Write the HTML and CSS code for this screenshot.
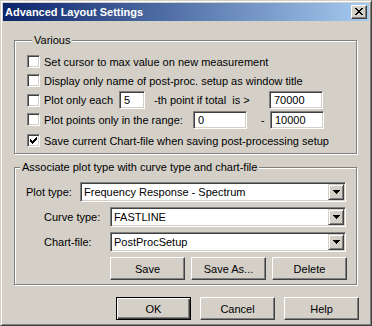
FILE: index.html
```html
<!DOCTYPE html>
<html>
<head>
<meta charset="utf-8">
<link rel="stylesheet" href="styles.css">
</head>
<body>
<div class="window">
  <div class="titlebar">
    <span class="title">Advanced Layout Settings</span>
    <div class="close">
      <svg width="8" height="7" viewBox="0 0 8 7" shape-rendering="crispEdges"><path fill="#000" d="M0 0h2v1H0z M6 0h2v1H6z M1 1h2v1H1z M5 1h2v1H5z M2 2h4v1H2z M3 3h2v1H3z M2 4h4v1H2z M1 5h2v1H1z M5 5h2v1H5z M0 6h2v1H0z M6 6h2v1H6z"/></svg>
    </div>
  </div>
  <div class="content">
    <fieldset class="group various">
      <legend>Various</legend>
      <div class="row r1"><span class="cb"></span><span class="lbl">Set cursor to max value on new measurement</span></div>
      <div class="row r2"><span class="cb"></span><span class="lbl">Display only name of post-proc. setup as window title</span></div>
      <div class="row r3">
        <span class="cb"></span><span class="lbl w-each">Plot only each</span>
        <span class="edit w-5">5</span>
        <span class="lbl w-th">-th point if total&nbsp; is &gt;</span>
        <span class="edit w-num">70000</span>
      </div>
      <div class="row r4">
        <span class="cb"></span><span class="lbl w-range">Plot points only in the range:</span>
        <span class="edit w-num">0</span>
        <span class="lbl w-dash">-</span>
        <span class="edit w-num">10000</span>
      </div>
      <div class="row r5"><span class="cb checked"><svg width="7" height="7" viewBox="0 0 7 7" shape-rendering="crispEdges"><path fill="#000" d="M6 0h1v1H6z M5 1h2v1H5z M0 2h1v1H0z M4 2h3v1H4z M0 3h2v1H0z M3 3h3v1H3z M0 4h5v1H0z M1 5h3v1H1z M2 6h1v1H2z"/></svg></span><span class="lbl">Save current Chart-file when saving post-processing setup</span></div>
    </fieldset>

    <fieldset class="group assoc">
      <legend>Associate plot type with curve type and chart-file</legend>
      <div class="crow plot">
        <span class="clabel">Plot type:</span>
        <div class="combo"><span class="ctext">Frequency Response - Spectrum</span><span class="arrow"><svg width="7" height="4" viewBox="0 0 7 4" shape-rendering="crispEdges"><path fill="#000" d="M0 0h7v1H0z M1 1h5v1H1z M2 2h3v1H2z M3 3h1v1H3z"/></svg></span></div>
      </div>
      <div class="crow sub">
        <span class="clabel">Curve type:</span>
        <div class="combo"><span class="ctext">FASTLINE</span><span class="arrow"><svg width="7" height="4" viewBox="0 0 7 4" shape-rendering="crispEdges"><path fill="#000" d="M0 0h7v1H0z M1 1h5v1H1z M2 2h3v1H2z M3 3h1v1H3z"/></svg></span></div>
      </div>
      <div class="crow sub">
        <span class="clabel">Chart-file:</span>
        <div class="combo"><span class="ctext">PostProcSetup</span><span class="arrow"><svg width="7" height="4" viewBox="0 0 7 4" shape-rendering="crispEdges"><path fill="#000" d="M0 0h7v1H0z M1 1h5v1H1z M2 2h3v1H2z M3 3h1v1H3z"/></svg></span></div>
      </div>
      <div class="brow">
        <span class="btn">Save</span>
        <span class="btn">Save As...</span>
        <span class="btn">Delete</span>
      </div>
    </fieldset>

    <div class="footer">
      <span class="btn default">OK</span>
      <span class="btn">Cancel</span>
      <span class="btn">Help</span>
    </div>
  </div>
</div>
</body>
</html>
```

FILE: styles.css
```css
* { box-sizing: border-box; }
body {
  margin: 0;
  font-family: "Liberation Sans", Arial, sans-serif;
  font-size: 11px;
  color: #000;
  background: #d4d0c8;
}
.window {
  width: 372px;
  height: 326px;
  background: #d4d0c8;
  border: 1px solid;
  border-color: #d4d0c8 #404040 #404040 #d4d0c8;
  box-shadow: inset 1px 1px #fff, inset -1px -1px #808080;
  padding: 2px;
  display: flex;
  flex-direction: column;
}
.titlebar {
  height: 18px;
  flex: none;
  display: flex;
  align-items: center;
  justify-content: space-between;
  padding: 0 2px;
  background: linear-gradient(to right, #0a246a, #a6caf0);
}
.title {
  color: #fff;
  font-weight: bold;
  font-size: 11px;
  line-height: 18px;
}
.close {
  width: 16px;
  height: 14px;
  background: #d4d0c8;
  border: 1px solid;
  border-color: #fff #404040 #404040 #fff;
  box-shadow: inset -1px -1px #808080;
  display: flex;
  align-items: flex-start;
  justify-content: flex-start;
  padding: 2px 0 0 3px;
}
.close svg { display: block; }
.content {
  padding: 13px 12px 0 11px;
}
.group {
  margin: 0;
  padding: 0;
  border: 1px solid #808080;
  box-shadow: inset 1px 1px #fff, 1px 1px #fff;
  min-width: 0;
}
.group legend {
  margin-left: 5px;
  padding: 0 2px;
  line-height: 13px;
  height: 13px;
  background: #d4d0c8;
}
.various { padding: 5px 0 3px 12px; }
.row {
  display: flex;
  align-items: center;
  height: 19px;
}
.r3 { height: 20px; }
.r5 { margin-top: 2px; }
.cb {
  width: 13px;
  height: 13px;
  flex: none;
  background: #fff;
  border: 1px solid;
  border-color: #808080 #fff #fff #808080;
  box-shadow: inset 1px 1px #404040, inset -1px -1px #d4d0c8;
  margin-right: 4px;
  padding: 2px 0 0 2px;
}
.cb svg { display: block; }
.lbl { white-space: nowrap; flex: none; }
.edit {
  height: 18px;
  flex: none;
  background: #fff;
  border: 1px solid;
  border-color: #808080 #fff #fff #808080;
  box-shadow: inset 1px 1px #404040, inset -1px -1px #d4d0c8;
  padding-left: 4px;
  line-height: 16px;
  white-space: nowrap;
}
.w-each { width: 75px; }
.w-5 { width: 26px; }
.w-th { width: 125px; padding-left: 9px; }
.w-num { width: 54px; }
.w-range { width: 149px; }
.w-dash { width: 23px; padding-left: 14px; }
.r3 .w-num { margin-left: -1px; }

.assoc {
  margin-top: 7px;
  padding: 8px 0 4px 0;
}
.crow {
  display: flex;
  align-items: center;
  height: 20px;
  margin-bottom: 5px;
}
.crow.plot { padding-left: 11px; }
.crow.plot .clabel { width: 54px; }
.crow.sub { padding-left: 29px; }
.crow.sub .clabel { width: 66px; }
.crow:last-of-type { margin-bottom: 2px; }
.clabel { flex: none; white-space: nowrap; }
.combo {
  width: 266px;
  height: 20px;
  flex: none;
  display: flex;
  background: #fff;
  border: 1px solid;
  border-color: #808080 #fff #fff #808080;
  box-shadow: inset 1px 1px #404040, inset -1px -1px #d4d0c8;
  padding: 1px;
}
.crow.sub .combo { width: 236px; }
.ctext {
  flex: 1;
  padding-left: 2px;
  line-height: 16px;
  white-space: nowrap;
}
.arrow {
  width: 16px;
  height: 16px;
  flex: none;
  background: #d4d0c8;
  border: 1px solid;
  border-color: #d4d0c8 #404040 #404040 #d4d0c8;
  box-shadow: inset 1px 1px #fff, inset -1px -1px #808080;
  display: flex;
  align-items: center;
  justify-content: center;
}
.arrow svg { display: block; margin-left: 0px; }
.brow {
  display: flex;
  gap: 6px;
  padding-left: 95px;
  margin-top: 2px;
}
.btn {
  width: 75px;
  height: 23px;
  flex: none;
  display: flex;
  align-items: center;
  justify-content: center;
  background: #d4d0c8;
  border: 1px solid;
  border-color: #fff #404040 #404040 #fff;
  box-shadow: inset -1px -1px #808080;
  white-space: nowrap;
}
.btn.default {
  border-color: #000;
  box-shadow: inset 1px 1px #fff, inset -1px -1px #404040, inset -2px -2px #808080;
}
.footer {
  display: flex;
  justify-content: flex-end;
  gap: 9px;
  margin-top: 12px;
  padding-right: -2px;
  margin-right: -2px;
}
```
